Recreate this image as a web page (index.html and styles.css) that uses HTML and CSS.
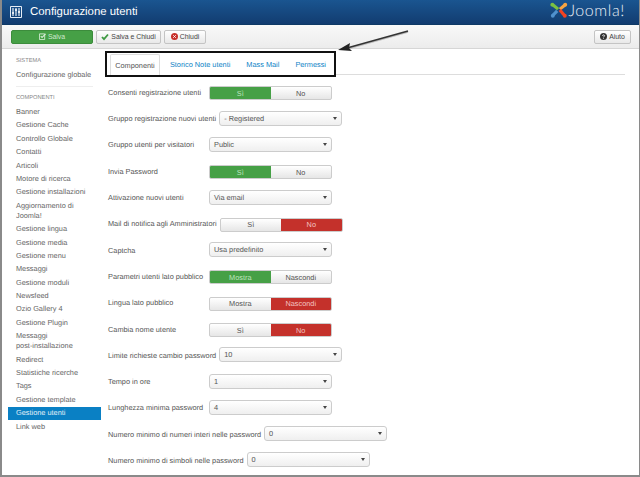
FILE: index.html
```html
<!DOCTYPE html>
<html lang="it">
<head>
<meta charset="utf-8">
<title>Configurazione utenti</title>
<link rel="stylesheet" href="styles.css">
</head>
<body>
<div class="frame">
  <header class="topbar">
    <svg class="menu-icon" viewBox="0 0 12 12" width="12" height="12"><path d="M.5.5h11v11H.5z" fill="none" stroke="#e6edf5"/><path d="M3 2v8M6 2v8M9 2v8" stroke="#e6edf5" stroke-width="1.200"/><path d="M2 7h2M5 4h2M8 6h2" stroke="#fff" stroke-width="1.600"/></svg>
    <h1 class="title">Configurazione utenti</h1>
    <div class="logo">
      <svg viewBox="0 0 20 18" width="18" height="16">
        <path d="M3 3l6 5" stroke="#7ac143" stroke-width="3.600" fill="none"/>
        <path d="M17 3l-6 5" stroke="#f9a541" stroke-width="3.600" fill="none"/>
        <path d="M3 15l5-5" stroke="#5091cd" stroke-width="3.600" fill="none"/>
        <path d="M16 15l-5-6" stroke="#f44321" stroke-width="3.600" fill="none"/>
        <circle cx="2.500" cy="3" r="2.200" fill="#7ac143"/><circle cx="17" cy="3" r="2.200" fill="#f9a541"/><circle cx="3" cy="15.500" r="2.200" fill="#5091cd"/><circle cx="16.500" cy="15.500" r="2.200" fill="#f44321"/>
      </svg>
      <span class="logo-text">Joomla!</span>
    </div>
  </header>
  <nav class="toolbar">
    <button class="btn btn-save"><svg viewBox="0 0 8 8" width="7" height="7"><path d="M.5 1h6v6.500h-6z" fill="none" stroke="#d7edd7"/><path d="M2 3.500l1.500 1.500L7.500 1" fill="none" stroke="#d7edd7" stroke-width="1.300"/></svg>Salva</button>
    <button class="btn btn-close-save"><svg viewBox="0 0 8 8" width="8" height="8"><path d="M1 4l2 2.200L7 1.500" fill="none" stroke="#3f9a43" stroke-width="1.800"/></svg>Salva e Chiudi</button>
    <button class="btn btn-close"><svg viewBox="0 0 8 8" width="7" height="7"><circle cx="4" cy="4" r="4" fill="#c7302a"/><path d="M2.500 2.500l3 3M5.500 2.500l-3 3" stroke="#fff"/></svg>Chiudi</button>
    <button class="btn btn-help"><svg viewBox="0 0 8 8" width="7" height="7"><circle cx="4" cy="4" r="4" fill="#333"/><path d="M2.800 3.200C3 1.800 5.200 1.800 5.200 3.200 5.200 4.100 4 4 4 5" fill="none" stroke="#fff"/><path d="M3.600 5.800h.8v.8h-.8z" fill="#fff"/></svg>Aiuto</button>
  </nav>
  <div class="body">
    <aside class="sidebar">
      <h2 class="side-head">SISTEMA</h2>
      <a class="side-link">Configurazione globale</a>
      <hr class="side-rule">
      <h2 class="side-head">COMPONENTI</h2>
      <a class="side-link">Banner</a>
      <a class="side-link">Gestione Cache</a>
      <a class="side-link">Controllo Globale</a>
      <a class="side-link">Contatti</a>
      <a class="side-link">Articoli</a>
      <a class="side-link">Motore di ricerca</a>
      <a class="side-link">Gestione installazioni</a>
      <a class="side-link">Aggiornamento di Joomla!</a>
      <a class="side-link">Gestione lingua</a>
      <a class="side-link">Gestione media</a>
      <a class="side-link">Gestione menu</a>
      <a class="side-link">Messaggi</a>
      <a class="side-link">Gestione moduli</a>
      <a class="side-link">Newsfeed</a>
      <a class="side-link">Ozio Gallery 4</a>
      <a class="side-link">Gestione Plugin</a>
      <a class="side-link">Messaggi <span class="nowrap">post-installazione</span></a>
      <a class="side-link">Redirect</a>
      <a class="side-link">Statistiche ricerche</a>
      <a class="side-link">Tags</a>
      <a class="side-link">Gestione template</a>
      <a class="side-link active">Gestione utenti</a>
      <a class="side-link">Link web</a>
    </aside>
    <main class="main">
      <div class="tabline">
        <div class="tabs">
          <a class="tab current">Componenti</a>
          <a class="tab">Storico Note utenti</a>
          <a class="tab">Mass Mail</a>
          <a class="tab">Permessi</a>
        </div>
      </div>
      <form class="form">
        <div class="row"><label class="lbl">Consenti registrazione utenti</label><div class="toggle"><span class="opt on-green">Sì</span><span class="opt">No</span></div></div>
        <div class="row"><label class="lbl">Gruppo registrazione nuovi utenti</label><div class="select">- Registered</div></div>
        <div class="row"><label class="lbl">Gruppo utenti per visitatori</label><div class="select">Public</div></div>
        <div class="row"><label class="lbl">Invia Password</label><div class="toggle"><span class="opt on-green">Sì</span><span class="opt">No</span></div></div>
        <div class="row"><label class="lbl">Attivazione nuovi utenti</label><div class="select">Via email</div></div>
        <div class="row"><label class="lbl">Mail di notifica agli Amministratori</label><div class="toggle"><span class="opt">Sì</span><span class="opt on-red">No</span></div></div>
        <div class="row"><label class="lbl">Captcha</label><div class="select">Usa predefinito</div></div>
        <div class="row"><label class="lbl">Parametri utenti lato pubblico</label><div class="toggle"><span class="opt on-green">Mostra</span><span class="opt">Nascondi</span></div></div>
        <div class="row"><label class="lbl">Lingua lato pubblico</label><div class="toggle"><span class="opt">Mostra</span><span class="opt on-red">Nascondi</span></div></div>
        <div class="row"><label class="lbl">Cambia nome utente</label><div class="toggle"><span class="opt">Sì</span><span class="opt on-red">No</span></div></div>
        <div class="row"><label class="lbl">Limite richieste cambio password</label><div class="select">10</div></div>
        <div class="row"><label class="lbl">Tempo in ore</label><div class="select">1</div></div>
        <div class="row"><label class="lbl">Lunghezza minima password</label><div class="select">4</div></div>
        <div class="row"><label class="lbl">Numero minimo di numeri interi nelle password</label><div class="select">0</div></div>
        <div class="row"><label class="lbl">Numero minimo di simboli nelle password</label><div class="select">0</div></div>
      </form>
    </main>
  </div>
  <svg class="arrow" viewBox="0 0 80 30" width="80" height="30">
    <path d="M73 3 L12 20" stroke="#bbb" stroke-width="1.500" fill="none"/>
    <path d="M73 2 L12 19" stroke="#333" stroke-width="1.600" fill="none"/>
    <path d="M3 21 L15 14 L14 19 L17 22 Z" fill="#222"/>
  </svg>
</div>
</body>
</html>
```
FILE: styles.css
```css
* { box-sizing: border-box; }
html, body { margin: 0; padding: 0; }
body { width: 640px; height: 477px; overflow: hidden; background: #fff; font-family: "Liberation Sans", Arial, sans-serif; font-size: 7.350px; color: #555; text-rendering: geometricPrecision; }
.frame { position: relative; width: 640px; height: 477px; overflow: hidden; border-left: 2px solid #8a8a8a; border-right: 1px solid #8a8a8a; border-bottom: 2px solid #8a8a8a; }
.topbar { height: 25px; display: flex; align-items: center; padding: 0 8px; background: linear-gradient(#1a5590, #123c70); border-bottom: 1px solid #0f3a66; color: #fff; }
.menu-icon { flex: none; }
.title { margin: 0 0 0 8px; font-size: 11.400px; font-weight: 400; color: #fff; }
.logo { margin-left: auto; margin-right: 6px; margin-bottom: 4px; display: flex; align-items: center; gap: 0; }
.logo-text { font-family: Lato, sans-serif; font-weight: 300; font-size: 16px; letter-spacing: .6px; color: #e8eef5; }
.toolbar { height: 24px; display: flex; align-items: center; gap: 3px; padding: 0 9px; background: linear-gradient(#f9f9f9, #ececec); border-bottom: 1px solid #d6d6d6; }
.btn { height: 14px; padding: 0 4px; display: flex; align-items: center; justify-content: center; gap: 2px; font: inherit; font-size: 6.900px; color: #444; border: 1px solid #c4c4c4; border-radius: 2px; background: linear-gradient(#fff, #e8e8e8); }
.btn-save { width: 82px; background: #46a046; border-color: #3c8c3c; color: #cfe8cf; }
.btn-close-save { width: 65px; }
.btn-close { width: 42px; }
.btn-help { margin-left: auto; margin-right: -1px; width: 37px; }
.body { display: flex; }
.sidebar { flex: none; width: 93px; margin-left: 6px; padding-top: 7px; }
.side-head { margin: 0; padding: 0 8px; font-size: 5.700px; font-weight: 400; color: #888; line-height: 10px; }
.side-link { display: block; padding: 1.600px 8px 1.800px; line-height: 10px; color: #666; }
.side-link.active { background: #0a80c4; color: #e3f0f8; }
.side-head + .side-link { margin-top: 2px; }
.side-rule { border: 0; border-top: 1px solid #eee; margin: 5px 8px 6px; }
.nowrap { white-space: nowrap; }
.main { flex: 1; padding: 2px 14px 0 4px; min-width: 0; }
.tabline { height: 24px; border-bottom: 1px solid #ddd; }
.tabs { width: 231px; height: 26px; display: flex; align-items: flex-start; border: 2px solid #111; padding: 1px 0 0 3px; background: #fff; }
.tab { height: 20px; padding: 0 8px; display: flex; align-items: center; color: #0d83c6; white-space: nowrap; }
.tab.current { height: 21px; width: 51px; margin-right: 2px; justify-content: center; padding: 0; border: 1px solid #ddd; border-bottom: 0; border-radius: 2px 2px 0 0; color: #555; }
.form { padding: 3.700px 0 0 3px; }
.row { height: 26.300px; display: flex; align-items: center; gap: 3px; }
.lbl { flex: none; min-width: 98px; padding-top: 1px; white-space: nowrap; }
.toggle { display: flex; width: 123px; height: 14px; margin-top: 3px; border-radius: 2px; overflow: hidden; border: 1px solid #ccc; background: linear-gradient(#fff, #e6e6e6); }
.opt { flex: 1 1 0; display: flex; align-items: center; justify-content: center; color: #555; }
.on-green { background: #46a046; color: #bfe3bf; }
.on-red { background: #c4312b; color: #f3c3c0; }
.select { position: relative; width: 123px; height: 15px; padding: 0 4px; display: flex; align-items: center; border: 1px solid #ccc; border-radius: 3px; background: linear-gradient(#fff, #efefef); color: #555; }
.select::after { content: ""; position: absolute; right: 4px; top: 5px; border: 2px solid transparent; border-top: 3px solid #444; }
.arrow { position: absolute; left: 333px; top: 29px; }
```
